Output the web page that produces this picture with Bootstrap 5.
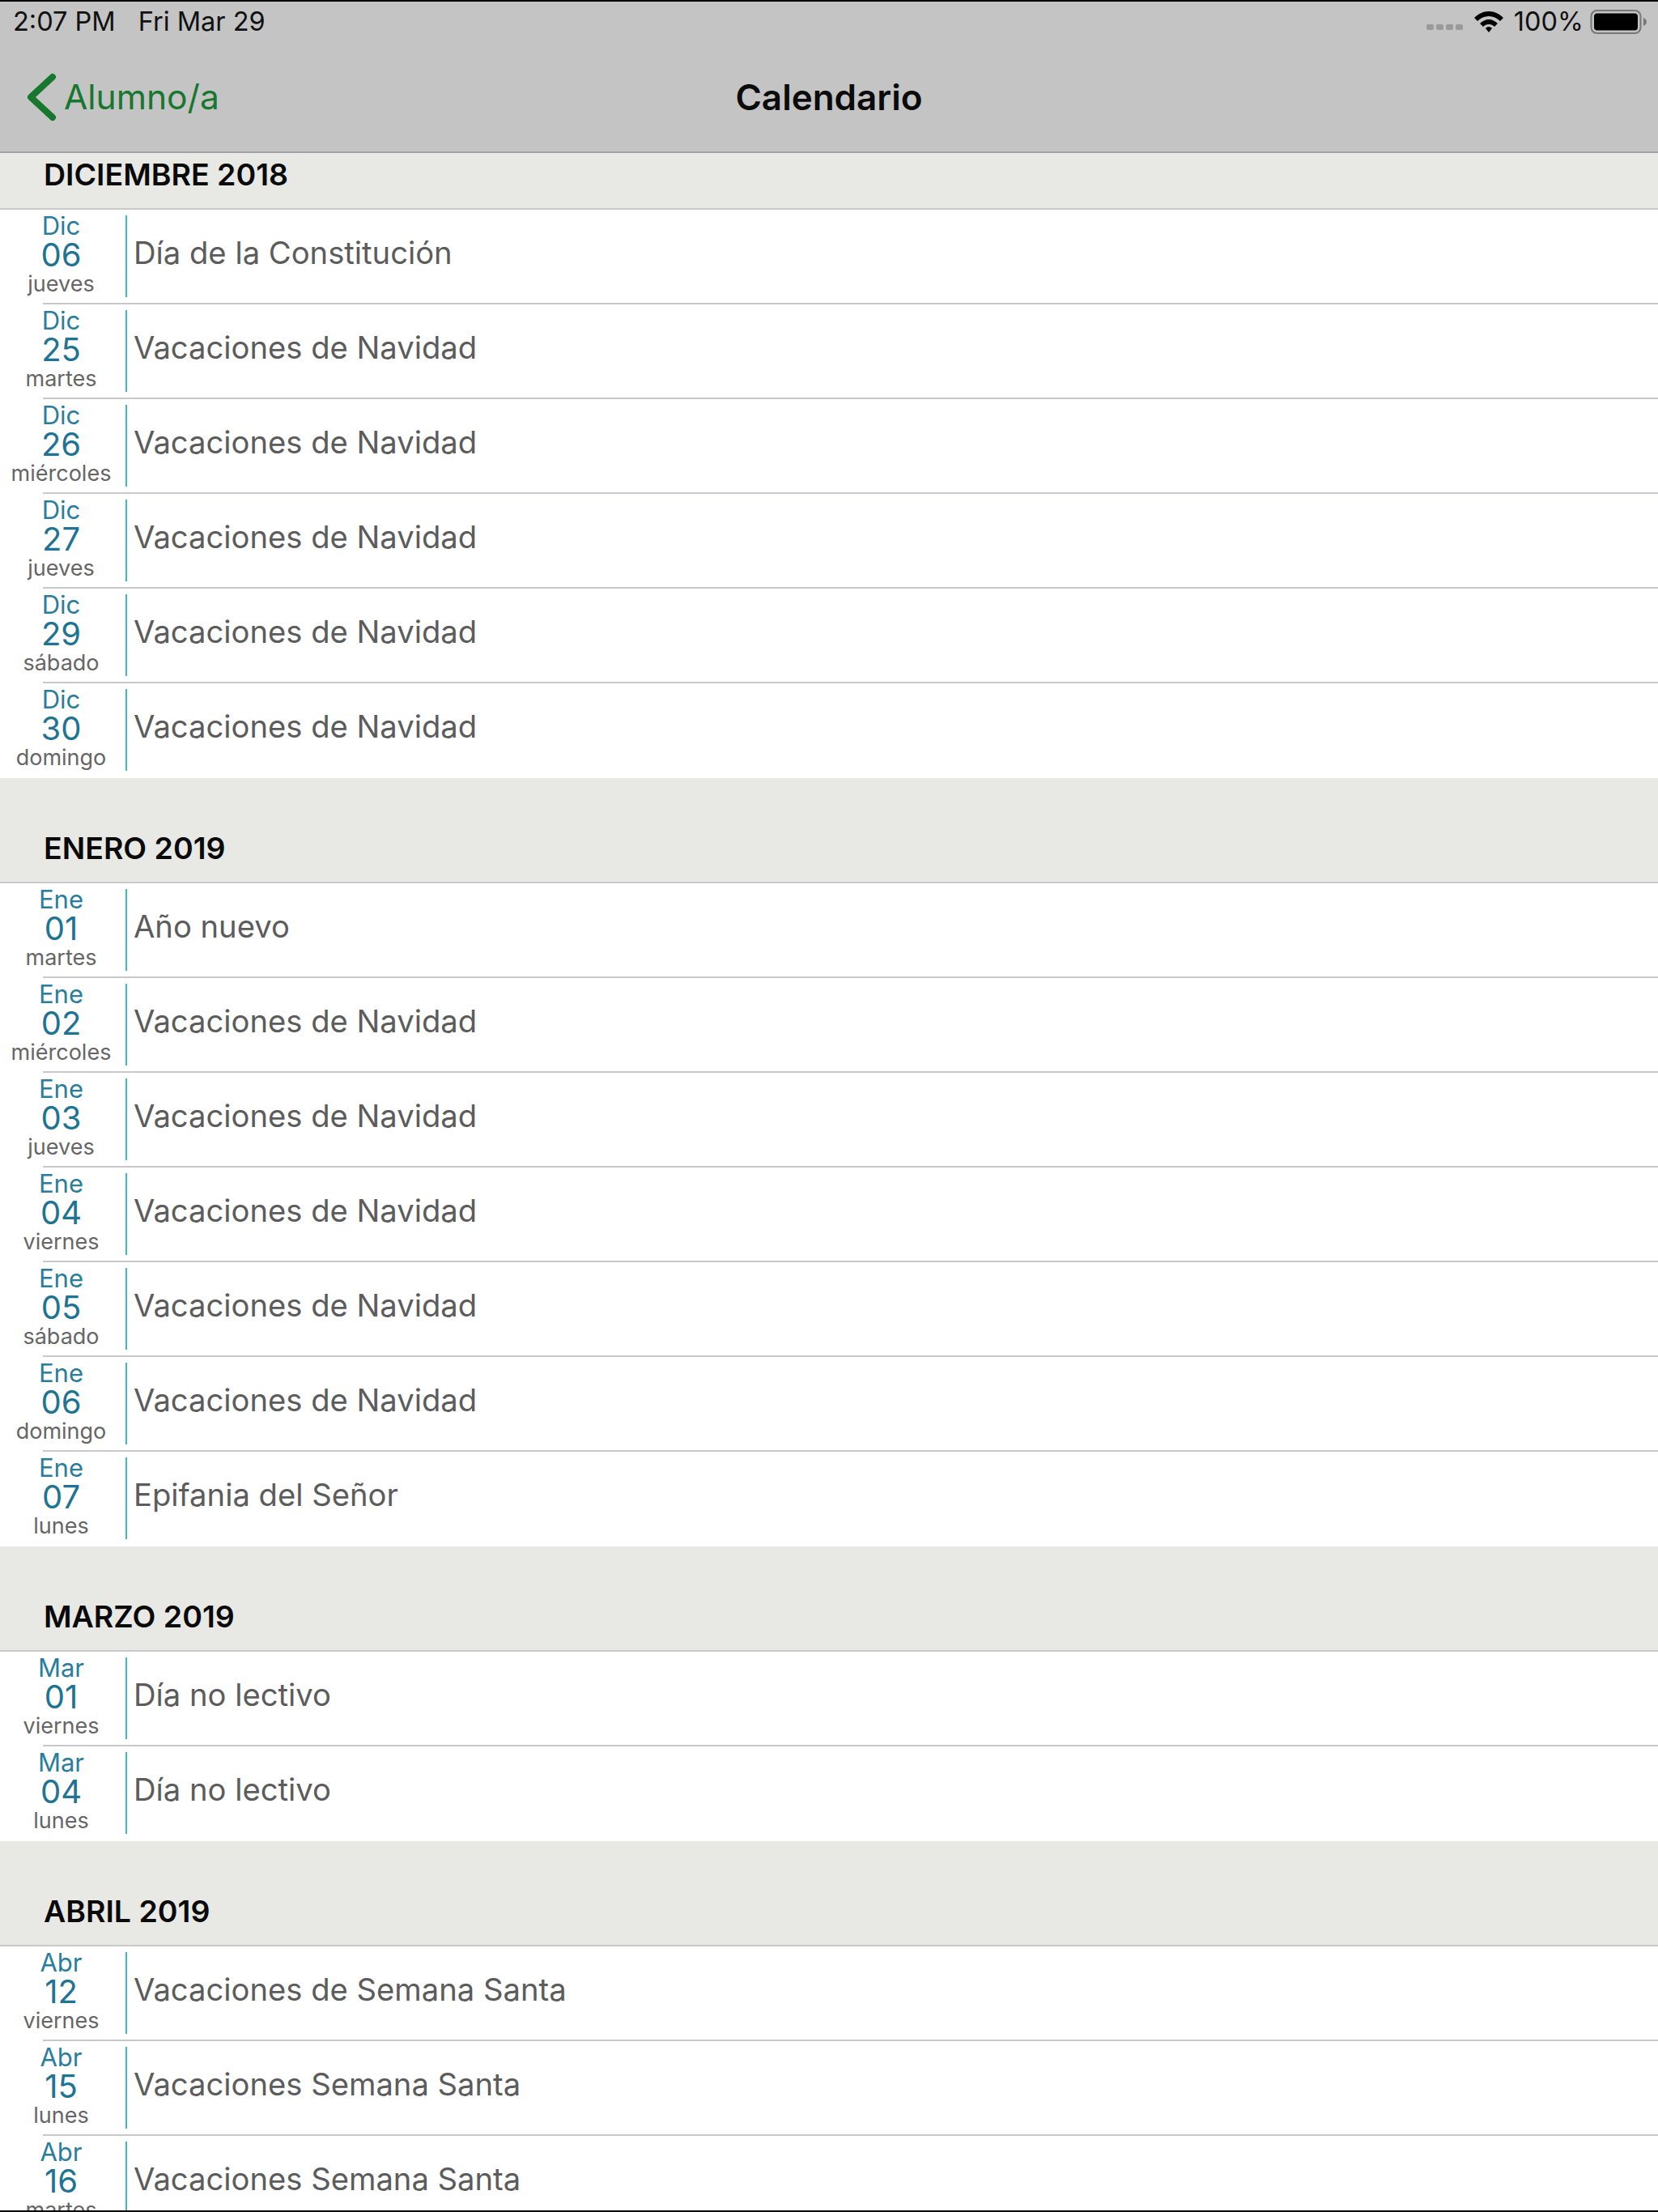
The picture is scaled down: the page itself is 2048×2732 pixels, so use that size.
<!DOCTYPE html>
<html lang="es">
<head>
  <meta charset="UTF-8" />
  <meta name="viewport" content="width=device-width, initial-scale=1" />
  <title>Calendario</title>
  <link href="https://cdn.jsdelivr.net/npm/bootstrap@5.3.0/dist/css/bootstrap.min.css" rel="stylesheet" />
  <style>
    body { background: #fff; font-family: Inter, Roboto, "Liberation Sans", sans-serif; overflow: hidden; }
    .app-frame { height: 2732px; overflow: hidden; border-top: 2px solid #000; border-bottom: 2px solid #000; }
    .top-area { background: #c4c4c4; border-bottom: 2px solid #a2a2a2; height: 187px; }
    .status-line { height: 50px; padding: 0 12px 0 16px; font-size: 32.5px; color: #111; }
    .status-gap { margin-left: 28px; }
    .signal-dots { gap: 3px; margin-top: 12px; margin-right: 14px; }
    .signal-dots i { width: 9px; height: 7px; border-radius: 2px; background: #9a9a9a; display: block; }
    .pct-text { margin-left: 13px; }
    .batt-icon { margin-left: 8px; }
    .nav-grid { display: grid; grid-template-columns: 1fr auto 1fr; align-items: center; height: 135px; padding: 0 32px; }
    .back-btn { color: #18772f; font-size: 42.5px; text-decoration: none; gap: 7px; }
    .screen-title { font-size: 44px; font-weight: 600; color: #0b0b0b; }
    .month-head { background: #e8e9e5; border-bottom: 2px solid #c9c9c9; color: #0a0a0a; font-size: 37.5px; font-weight: 600; padding-left: 54px; display: flex; align-items: flex-end; }
    .month-head.first-head { height: 70px; padding-bottom: 13px; }
    .month-head.next-head { height: 130px; padding-bottom: 13px; }
    .day-list { border-radius: 0; }
    .day-row { border: 0; border-radius: 0 !important; padding: 0; height: 117px; display: flex; align-items: center; position: relative; }
    .day-row::after { content: ""; position: absolute; left: 53px; right: 0; bottom: 0; height: 2px; background: #c8c8cc; }
    .day-row:last-child::after { display: none; }
    .date-box { width: 157px; height: 101px; margin-top: -3px; border-right: 2px solid #3db9cc; padding-right: 4px; text-align: center; flex-shrink: 0; }
    .date-mon, .date-num, .date-day { display: block; height: 36px; line-height: 36px; white-space: nowrap; }
    .date-mon { font-size: 31px; color: #2a7d9c; margin-top: -5px; }
    .date-num { font-size: 40px; color: #1f7393; }
    .date-day { font-size: 27px; color: #666; }
    .row-title { font-size: 38.2px; color: #5c5c5c; margin-left: 8px; margin-top: -10px; }
  </style>
</head>
<body>
  <div class="app-frame">
    <div class="top-area">
      <div class="status-line d-flex align-items-center justify-content-between">
        <div><span>2:07 PM</span><span class="status-gap">Fri Mar 29</span></div>
        <div class="d-flex align-items-center">
          <div class="signal-dots d-flex"><i></i><i></i><i></i><i></i></div>
          <svg width="36" height="28" viewBox="0 0 36 28">
            <path d="M18 1 C11 1 5 4 0 9 L4 13 C8 9 13 7 18 7 C23 7 28 9 32 13 L36 9 C31 4 25 1 18 1 Z" fill="#000" />
            <path d="M18 11 C14 11 10 13 7 16 L11 20 C13 18 15 17 18 17 C21 17 23 18 25 20 L29 16 C26 13 22 11 18 11 Z" fill="#000" />
            <path d="M18 20 C16 20 15 21 14 22 L18 27 L22 22 C21 21 20 20 18 20 Z" fill="#000" />
          </svg>
          <span class="pct-text">100%</span>
          <svg class="batt-icon" width="72" height="32" viewBox="0 0 72 32">
            <rect x="1.5" y="2" width="61" height="28" rx="7" fill="none" stroke="#777" stroke-width="2" />
            <rect x="5" y="5.5" width="54" height="21" rx="4" fill="#000" />
            <path d="M66 11 Q70 13 70 16 Q70 19 66 21 Z" fill="#777" />
          </svg>
        </div>
      </div>
      <div class="nav-grid">
        <a href="#" class="back-btn d-flex align-items-center">
          <svg width="40" height="60" viewBox="0 0 40 60"><path d="M33 5 L6 30 L33 55" fill="none" stroke="#18772f" stroke-width="8" stroke-linecap="round" stroke-linejoin="round" /></svg>
          <span>Alumno/a</span>
        </a>
        <div class="screen-title">Calendario</div>
        <div></div>
      </div>
    </div>
    <div id="calendar"></div>
  </div>

  <script src="https://cdn.jsdelivr.net/npm/bootstrap@5.3.0/dist/js/bootstrap.bundle.min.js"></script>
  <script>
    const nav = "Vacaciones de Navidad";
    const months = [
      { name: "DICIEMBRE 2018", abbr: "Dic", days: [
        ["06", "jueves", "Día de la Constitución"], ["25", "martes", nav], ["26", "miércoles", nav],
        ["27", "jueves", nav], ["29", "sábado", nav], ["30", "domingo", nav] ] },
      { name: "ENERO 2019", abbr: "Ene", days: [
        ["01", "martes", "Año nuevo"], ["02", "miércoles", nav], ["03", "jueves", nav], ["04", "viernes", nav],
        ["05", "sábado", nav], ["06", "domingo", nav], ["07", "lunes", "Epifania del Señor"] ] },
      { name: "MARZO 2019", abbr: "Mar", days: [
        ["01", "viernes", "Día no lectivo"], ["04", "lunes", "Día no lectivo"] ] },
      { name: "ABRIL 2019", abbr: "Abr", days: [
        ["12", "viernes", "Vacaciones de Semana Santa"], ["15", "lunes", "Vacaciones Semana Santa"],
        ["16", "martes", "Vacaciones Semana Santa"] ] }
    ];

    document.getElementById("calendar").innerHTML = months.map((m, i) => `
      <div class="month-head ${i === 0 ? "first-head" : "next-head"}">${m.name}</div>
      <ul class="list-group day-list">
        ${m.days.map(d => `
          <li class="list-group-item day-row">
            <div class="date-box">
              <span class="date-mon">${m.abbr}</span>
              <span class="date-num">${d[0]}</span>
              <span class="date-day">${d[1]}</span>
            </div>
            <div class="row-title">${d[2]}</div>
          </li>`).join("")}
      </ul>`).join("");
  </script>
</body>
</html>
